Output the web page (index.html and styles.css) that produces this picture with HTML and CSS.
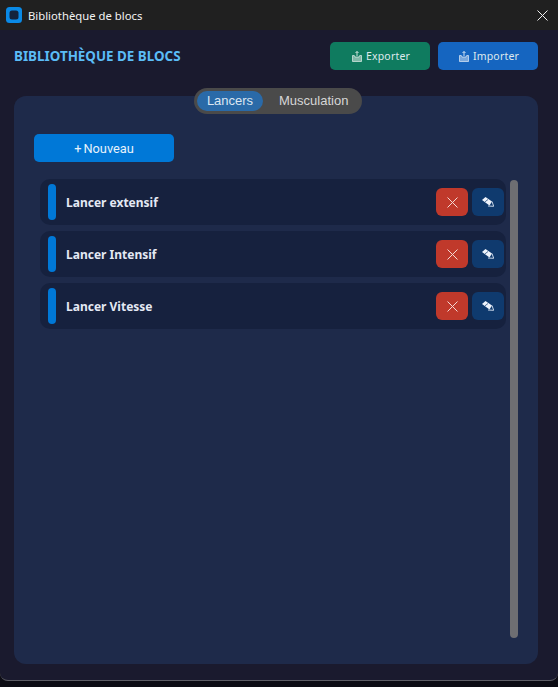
FILE: index.html
```html
<!DOCTYPE html>
<html lang="fr">
<head>
<meta charset="utf-8">
<title>Bibliothèque de blocs</title>
<link rel="stylesheet" href="styles.css">
</head>
<body>
<div class="window">
  <header class="titlebar">
    <svg class="app-icon" width="16" height="16" viewBox="0 0 16 16"><rect width="16" height="16" rx="3.500" fill="#0a8ae6"/><rect x="3.500" y="3.500" width="9" height="9" rx="2.500" fill="#14233c"/></svg>
    <span class="title-text">Bibliothèque de blocs</span>
    <svg class="close-icon" width="11" height="11" viewBox="0 0 11 11"><path d="M.5.5l10 10M10.500.5l-10 10" stroke="#f0f0f0" stroke-width="1" fill="none"/></svg>
  </header>
  <main class="content">
    <div class="topbar">
      <h1 class="heading">BIBLIOTHÈQUE DE BLOCS</h1>
      <div class="actions">
        <button class="action export"><svg class="tray" width="10" height="11" viewBox="0 0 10 11"><path d="M5 .5v4.500M3.500 2L5 .5 6.500 2" stroke="#dfeee9" stroke-width=".9" fill="none"/><path d="M.5 4.500h1.800l.7 1.500h4l.7-1.500h1.800v6h-9z" fill="#7fb8a8" stroke="#e2efeb" stroke-width=".7"/></svg>Exporter</button>
        <button class="action import"><svg class="tray" width="10" height="11" viewBox="0 0 10 11"><path d="M5 .5v4.500M3.500 2L5 .5 6.500 2" stroke="#e2edf8" stroke-width=".9" fill="none"/><path d="M.5 4.500h1.800l.7 1.500h4l.7-1.500h1.800v6h-9z" fill="#7aa8dc" stroke="#e2edf8" stroke-width=".7"/></svg>Importer</button>
      </div>
    </div>
    <section class="panel">
      <div class="tabs">
        <span class="tab active">Lancers</span>
        <span class="tab">Musculation</span>
      </div>
      <button class="new-btn"><span class="plus">+</span>Nouveau</button>
      <div class="list-area">
        <ul class="list">
          <li class="row"><span class="accent"></span><span class="name">Lancer extensif</span>
            <button class="icon-btn del"><svg width="11" height="11" viewBox="0 0 11 11"><path d="M.5.5l10 10M10.500.5l-10 10" stroke="#f3d8d4" fill="none"/></svg></button>
            <button class="icon-btn edit"><svg width="12" height="10" viewBox="0 0 12 10"><path d="M0 3L3.500 0 10 4.500 7.500 8.500z" fill="#eef3fb"/><path d="M3 4.800L6 2.500" stroke="#0f3a6e" stroke-width=".7" fill="none"/><path d="M10 4.500L11.700 9.300 6 9" stroke="#dfe9f6" stroke-width=".9" fill="none"/></svg></button></li>
          <li class="row"><span class="accent"></span><span class="name">Lancer Intensif</span>
            <button class="icon-btn del"><svg width="11" height="11" viewBox="0 0 11 11"><path d="M.5.5l10 10M10.500.5l-10 10" stroke="#f3d8d4" fill="none"/></svg></button>
            <button class="icon-btn edit"><svg width="12" height="10" viewBox="0 0 12 10"><path d="M0 3L3.500 0 10 4.500 7.500 8.500z" fill="#eef3fb"/><path d="M3 4.800L6 2.500" stroke="#0f3a6e" stroke-width=".7" fill="none"/><path d="M10 4.500L11.700 9.300 6 9" stroke="#dfe9f6" stroke-width=".9" fill="none"/></svg></button></li>
          <li class="row"><span class="accent"></span><span class="name">Lancer Vitesse</span>
            <button class="icon-btn del"><svg width="11" height="11" viewBox="0 0 11 11"><path d="M.5.5l10 10M10.500.5l-10 10" stroke="#f3d8d4" fill="none"/></svg></button>
            <button class="icon-btn edit"><svg width="12" height="10" viewBox="0 0 12 10"><path d="M0 3L3.500 0 10 4.500 7.500 8.500z" fill="#eef3fb"/><path d="M3 4.800L6 2.500" stroke="#0f3a6e" stroke-width=".7" fill="none"/><path d="M10 4.500L11.700 9.300 6 9" stroke="#dfe9f6" stroke-width=".9" fill="none"/></svg></button></li>
        </ul>
        <div class="scrollbar"></div>
      </div>
    </section>
  </main>
</div>
</body>
</html>
```
FILE: styles.css
```css
* { box-sizing: border-box; }
html, body { margin: 0; height: 100%; }
body { background: #0c0c14; font-family: "Open Sans", "Noto Sans", sans-serif; overflow: hidden; }
button { font: inherit; border: 0; padding: 0; color: inherit; }
.window { height: 681px; display: flex; flex-direction: column; background: #1a1a2e; border-bottom: 1px solid #5e5e66; border-radius: 0 0 8px 8px; overflow: hidden; }
.titlebar { height: 30px; flex: none; background: #202020; display: flex; align-items: center; padding: 0 10px 0 6px; }
.app-icon { flex: none; }
.title-text { margin-left: 6px; flex: 1; font: 11.300px "Noto Sans", "Open Sans", sans-serif; color: #f2f2f2; }
.content { flex: 1; display: flex; flex-direction: column; padding: 12px 20px 16px 14px; min-height: 0; }
.topbar { height: 28px; flex: none; display: flex; align-items: center; justify-content: space-between; }
.heading { margin: 0; font: 700 13.400px "Noto Sans", "Open Sans", sans-serif; color: #5bbcf6; }
.actions { display: flex; gap: 8px; }
.action { width: 100px; height: 28px; border-radius: 5px; padding-left: 2px; display: flex; align-items: center; justify-content: center; gap: 4px; font: 10.500px "Noto Sans", sans-serif; color: #dfe9ec; letter-spacing: .2px; }
.tray { flex: none; }
.export { background: #0f7b5f; }
.import { background: #1565c0; }
.panel { margin-top: 26px; flex: 1; background: #1e2a4a; border-radius: 12px; position: relative; padding: 38px 10px 26px 20px; display: flex; flex-direction: column; min-height: 0; }
.tabs { position: absolute; top: -8px; left: 180px; width: 168px; height: 26px; border-radius: 13px; background: #4a4a4a; display: flex; align-items: center; padding: 0 3px; gap: 0; }
.tab { font: 13px "Liberation Sans", Arial, sans-serif; color: #d6d6d6; padding: 0 12px 0 16px; height: 20px; line-height: 20px; border-radius: 10px; white-space: nowrap; }
.tab.active { width: 66px; flex: none; background: #2a6aa8; color: #dbe6f2; padding: 0; text-align: center; }
.new-btn { width: 140px; height: 28px; flex: none; background: #0078d7; border-radius: 5px; color: #e6f2fb; font: 12.800px "Roboto", "Liberation Sans", sans-serif; display: flex; align-items: center; justify-content: center; }
.plus { margin-right: 2px; }
.list-area { margin-top: 17px; flex: 1; display: flex; gap: 4px; padding-left: 6px; min-height: 0; }
.list { list-style: none; margin: 0; padding: 0; width: 466px; display: flex; flex-direction: column; gap: 6px; }
.row { height: 46px; background: #16213e; border-radius: 10px; display: flex; align-items: center; padding: 0 2px 0 8px; gap: 4px; }
.accent { width: 8px; height: 36px; border-radius: 4px; background: #0078d7; flex: none; }
.name { flex: 1; margin-left: 6px; font: 700 12px "Noto Sans", "Open Sans", sans-serif; color: #e4e9f4; }
.icon-btn { width: 32px; height: 28px; border-radius: 6px; display: flex; align-items: center; justify-content: center; flex: none; }
.del { background: #c0392b; }
.edit { background: #0f3a6e; }
.scrollbar { width: 8px; margin-top: 1px; height: 458px; border-radius: 4px; background: #6e6e72; flex: none; }
```
